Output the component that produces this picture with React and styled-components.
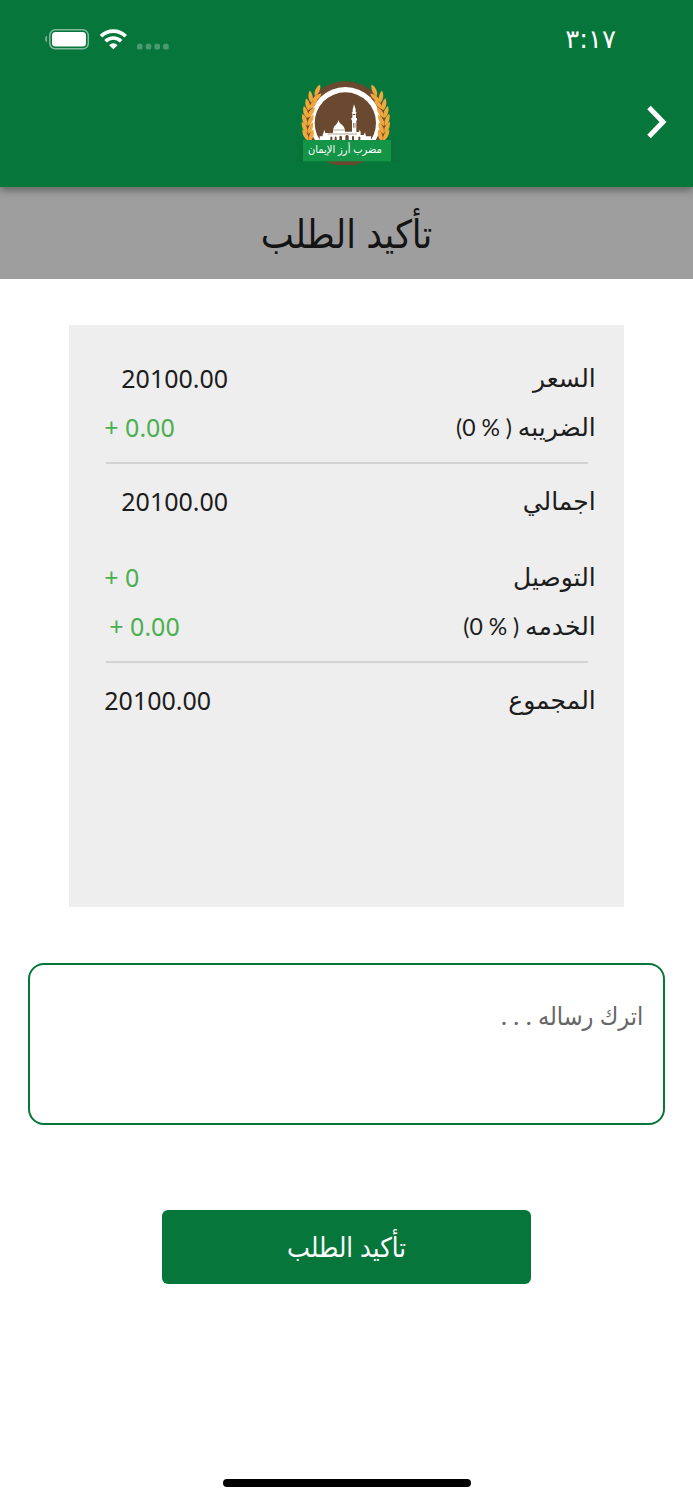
import React from "react";
import styled, { createGlobalStyle } from "styled-components";

const GREEN = "#07763b";

const GlobalStyle = createGlobalStyle`
  *, *::before, *::after { box-sizing: border-box; }
  body {
    margin: 0;
    background: #fff;
    color: #1c1c1c;
    font-family: "Noto Sans", "DejaVu Sans Condensed", "DejaVu Sans", sans-serif;
  }
`;

const Screen = styled.div`
  min-height: 100vh;
  display: flex;
  flex-direction: column;
`;

const Header = styled.header`
  position: relative;
  background: ${GREEN};
  color: #fff;
  box-shadow: 0 3px 8px rgba(0, 0, 0, 0.4);
`;

const StatusBar = styled.div`
  height: 78px;
  padding: 0 77px 0 45px;
  display: flex;
  align-items: center;
  justify-content: space-between;
`;

const Clock = styled.time`
  font-family: "DejaVu Sans", sans-serif;
  font-size: 26px;
  line-height: 32px;
`;

const StatusIcons = styled.div`
  display: flex;
  direction: ltr;
  svg { display: block; }
`;

const AppBar = styled.div`
  display: grid;
  grid-template-columns: 1fr auto 1fr;
  align-items: center;
  height: 109px;
  padding-bottom: 22px;
`;

const BackButton = styled.button`
  justify-self: start;
  margin-right: 18px;
  padding: 4px;
  border: 0;
  background: none;
  color: inherit;
  cursor: pointer;
  svg { display: block; }
`;

const TitleBand = styled.div`
  height: 92px;
  background: #9e9e9e;
  display: flex;
  align-items: center;
  justify-content: center;
`;

const Title = styled.h1`
  margin: 0;
  font-size: 39px;
  line-height: 56px;
  font-weight: 400;
  color: #141414;
`;

const Content = styled.main`
  flex: 1;
  display: flex;
  flex-direction: column;
  align-items: center;
`;

const Card = styled.section`
  width: 80%;
  margin-top: 46px;
  padding: 29px 28px 182px 35px;
  background: #eee;
`;

const Lines = styled.dl`
  margin: 0;
  & + & { margin-top: 27px; }
`;

const Line = styled.div`
  display: flex;
  justify-content: space-between;
  font-size: 25px;
  line-height: 49px;
`;

const Label = styled.dt`
  font-family: "DejaVu Sans", sans-serif;
  white-space: nowrap;
`;

const Rate = styled.span`
  font-family: Lato, sans-serif;
  font-size: 23px;
  line-height: 1;
`;

const Value = styled.dd`
  margin: 0;
  padding-left: ${(p) => p.$indent || 0}px;
  direction: ltr;
  color: ${(p) => (p.$extra ? "#4caf50" : "inherit")};
`;

const Divider = styled.hr`
  height: 2px;
  margin: 10px 8px 13px 2px;
  border: 0;
  background: #d2d2d2;
`;

const Message = styled.textarea`
  display: block;
  width: 92%;
  height: 162px;
  margin-top: 56px;
  padding: 30px 20px;
  border: 2px solid ${GREEN};
  border-radius: 16px;
  background: #fff;
  color: #1c1c1c;
  font-family: Lato, "DejaVu Sans Condensed", "DejaVu Sans", sans-serif;
  font-size: 25px;
  line-height: 40px;
  resize: none;
  &::placeholder { color: #666; opacity: 1; }
`;

const Confirm = styled.button`
  width: 53.3%;
  height: 74px;
  margin-top: 85px;
  border: 0;
  border-radius: 6px;
  background: ${GREEN};
  color: #fff;
  font-family: inherit;
  font-size: 27px;
  line-height: 40px;
  cursor: pointer;
`;

const HomeIndicator = styled.div`
  width: 248px;
  height: 8px;
  margin: auto auto 13px;
  border-radius: 4px;
  background: #000;
`;

function Signals() {
  return (
    <svg width="126" height="24" viewBox="0 0 126 24" aria-hidden="true">
      <path d="M2 8.500Q0 9 0 12t2 3.500z" fill="#fff" opacity=".45" />
      <rect x="4.800" y="2.800" width="38.500" height="19" rx="5.500" fill="none" stroke="#fff" strokeOpacity=".5" strokeWidth="1.500" />
      <rect x="7" y="5" width="34" height="14.600" rx="3.500" fill="#fff" />
      <g fill="none" stroke="#fff" strokeWidth="3.700">
        <path d="M56 9.200a17.500 17.500 0 0 1 24.700 0" />
        <path d="M60.600 14.200a11 11 0 0 1 15.500 0" />
      </g>
      <path d="M68.350 22.300l-4.200-4.100a5.700 5.700 0 0 1 8.400 0z" fill="#fff" />
      <g fill="#fff" opacity=".27">
        <rect x="92" y="16.800" width="5.600" height="5.600" rx="1.700" />
        <rect x="100.700" y="16.800" width="5.600" height="5.600" rx="1.700" />
        <rect x="109.400" y="16.800" width="5.600" height="5.600" rx="1.700" />
        <rect x="118.100" y="16.800" width="5.600" height="5.600" rx="1.700" />
      </g>
    </svg>
  );
}

const LEAVES = [
  [97, 61, 24], [77, 80, -8], [94, 82, 50],
  [68, 103, -12], [84, 103, 40],
  [62, 126, -16], [78, 127, 34],
  [59, 149, -20], [76, 151, 28],
  [59, 172, -24], [76, 174, 22],
  [62, 195, -28], [79, 197, 16],
];

function Branch() {
  return (
    <g fill="#f0a83c">
      {LEAVES.map(([x, y, r]) => (
        <path key={`${x}-${y}`} d="M0-20C8-10 9 8 0 18C-9 8-8-10 0-20z" transform={`translate(${x} ${y}) rotate(${r})`} />
      ))}
    </g>
  );
}

function Logo() {
  return (
    <svg width="120" height="87" viewBox="6 23 360 261" role="img" aria-label="مضرب أرز الإيمان">
      <circle cx="181" cy="160" r="127" fill="#6b4930" />
      <path d="M40 20H104Q50 90 64 209H40zM322 20H258Q312 90 298 209H322z" fill={GREEN} />
      <circle cx="181" cy="156" r="106" fill="#fff" />
      <circle cx="181" cy="158" r="92" fill="#6b4930" />
      <Branch />
      <g transform="matrix(-1 0 0 1 365 0)"><Branch /></g>
      <path
        fill="#fff"
        d="M104 210V198H112L115 188 118 179 121 188H144V178Q146 168 152 164Q159 158 160 150Q162 158 171 163Q178 169 180 178V184H201V150L199 148V143H202V130L200 126H203V116Q205 112 207 102Q210 112 212 116V126H215L213 130V143H216V149L214 151V185H222L224 178 227 185V194H236L240 186 243 198H258V210z"
      />
      <g fill="#6b4930">
        <path d="M144 178h36v2h-36zM128 190h88v2h-88zM203 131h8v3h-8zM204 158h2v14h-2zM209 158h2v14h-2z" />
        <path d="M136 210v-9q3-5 6 0v9zM149 210v-9q3-5 6 0v9zM163 210v-11q4-6 8 0v11zM181 210v-13q5-6 10 0v13zM201 210v-11q3-5 6 0v11zM220 210v-9q3-5 6 0v9z" />
      </g>
      <path d="M30 213h24v62H30l12-31zM342 213h-24v62h24l-12-31z" fill="#087238" />
      <rect x="54" y="209" width="264" height="64" fill="#139447" />
      <text x="180" y="249" textAnchor="middle" direction="rtl" fontSize="33" fill="#fff">
        مضرب أرز الإيمان
      </text>
    </svg>
  );
}

function Item({ label, rate, value, indent, extra }) {
  return (
    <Line>
      <Label>
        {label}
        {rate && <Rate> {rate}</Rate>}
      </Label>
      <Value $indent={indent} $extra={extra}>{value}</Value>
    </Line>
  );
}

export default function App() {
  return (
    <Screen dir="rtl" lang="ar">
      <GlobalStyle />
      <Header>
        <StatusBar>
          <Clock>٣:١٧</Clock>
          <StatusIcons><Signals /></StatusIcons>
        </StatusBar>
        <AppBar>
          <BackButton type="button" aria-label="رجوع">
            <svg width="28" height="34" viewBox="0 0 28 34" fill="none" stroke="#fff" strokeWidth="5" aria-hidden="true">
              <path d="M6 2.500L20 17 6 31.500" />
            </svg>
          </BackButton>
          <Logo />
        </AppBar>
      </Header>
      <TitleBand>
        <Title>تأكيد الطلب</Title>
      </TitleBand>
      <Content>
        <Card>
          <Lines>
            <Item label="السعر" value="20100.00" indent={17} />
            <Item label="الضريبه" rate="( % 0)" value="+ 0.00" extra />
          </Lines>
          <Divider />
          <Lines>
            <Item label="اجمالي" value="20100.00" indent={17} />
          </Lines>
          <Lines>
            <Item label="التوصيل" value="+ 0" extra />
            <Item label="الخدمه" rate="( % 0)" value="+ 0.00" indent={5} extra />
          </Lines>
          <Divider />
          <Lines>
            <Item label="المجموع" value="20100.00" />
          </Lines>
        </Card>
        <Message aria-label="اترك رساله" placeholder="اترك رساله . . ." />
        <Confirm type="button">تأكيد الطلب</Confirm>
      </Content>
      <HomeIndicator />
    </Screen>
  );
}
